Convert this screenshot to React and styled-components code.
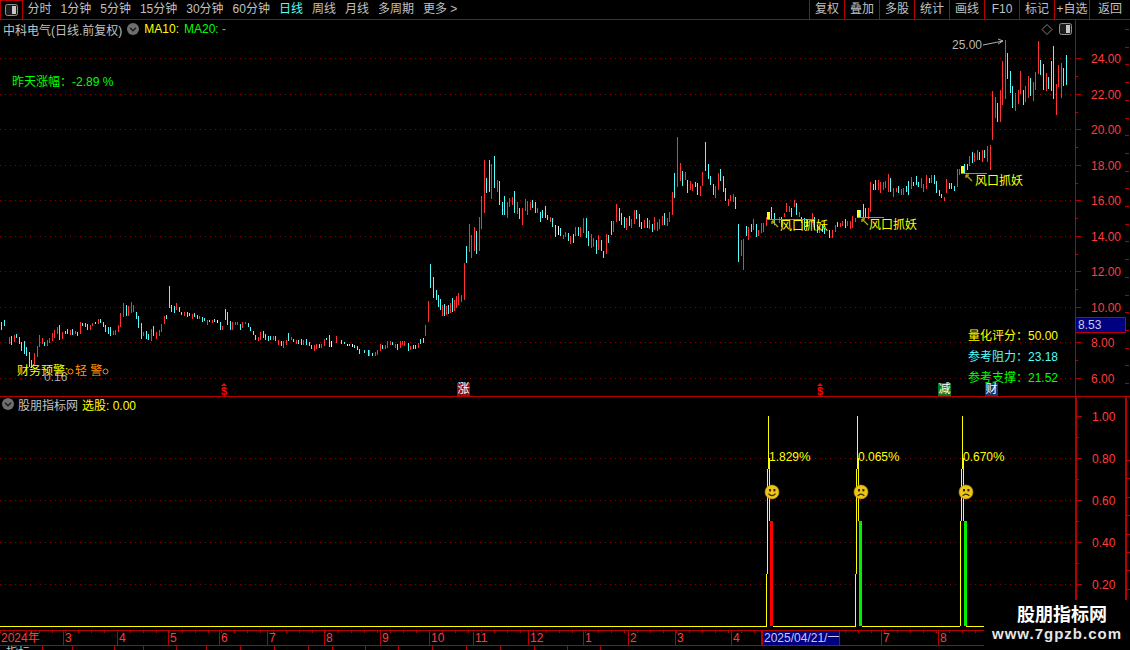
import React from 'react';
import styled, { createGlobalStyle } from 'styled-components';

const FONT = '"Liberation Sans", "Noto Sans CJK SC", sans-serif';
const RED = '#b80000';
const AXIS_TEXT = '#ff3c3c';
const GRID = '#8c0000';

const Global = createGlobalStyle`
  html, body { margin: 0; padding: 0; background: #000; }
  body { font-family: ${FONT}; font-size: 12px; overflow: hidden; }
`;

const Screen = styled.div`
  position: relative; width: 1130px; height: 650px; background: #000; overflow: hidden;
  display: flex; flex-direction: column; color: #c0c0c0;
`;
const Toolbar = styled.div`
  display: flex; align-items: stretch; height: 19px; flex: none;
  border-bottom: 1px solid ${RED};
`;
const ToggleBox = styled.div`
  width: 23px; display: flex; align-items: center; justify-content: center; box-sizing: border-box;
  border: 1px solid ${RED}; border-bottom: 0;
`;
const PeriodList = styled.div`
  display: flex; align-items: center; gap: 9px; padding-left: 4.5px; flex: 1;
`;
const Period = styled.span`
  color: ${p => (p.$active ? '#54fcfc' : '#c0c0c0')}; white-space: nowrap; line-height: 19px;
`;
const ToolGroup = styled.div`display: flex;`;
const ToolButton = styled.div`
  width: ${p => p.$w || 35}px; box-sizing: border-box; border-left: 1px solid ${RED};
  text-align: center; line-height: 18px; color: #c0c0c0; white-space: nowrap;
`;
const Panel = styled.div`
  display: flex; flex: none; height: ${p => p.$h}px; border-bottom: ${p => (p.$line ? `1px solid ${RED}` : '0')};
`;
const Plot = styled.div`position: relative; width: 1075px; flex: none;`;
const ChartSvg = styled.svg`display: block; position: absolute; left: 0; top: 0; overflow: visible;`;
const AxisColumn = styled.div`
  position: relative; flex: 1; box-sizing: border-box; height: ${p => p.$h || '100%'};
  border-left: ${p => p.$bw || 1}px solid ${RED};
  ${p => (p.$rail ? `border-right: 2px solid ${RED}; margin-right: 3px;` : '')}
`;
const AxisLabel = styled.span`
  position: absolute; left: 15px; line-height: 12px; color: ${AXIS_TEXT}; white-space: nowrap;
`;
const PriceTag = styled.div`
  position: absolute; left: 0; top: 297px; width: 50px; height: 16px; box-sizing: border-box;
  background: #000080; border: 1px solid ${RED}; border-left: 0; color: #c8c8e8;
  line-height: 15px; padding-left: 2px;
`;
const Legend = styled.div`
  position: absolute; left: ${p => p.$x}px; top: ${p => p.$y}px; height: 16px;
  display: flex; align-items: center; gap: ${p => p.$gap || 4}px; white-space: nowrap;
`;
const Tx = styled.span`color: ${p => p.$c || '#c0c0c0'}; font-size: ${p => p.$s || 12}px;`;
const Note = styled.span`
  position: absolute; left: ${p => p.$x}px; top: ${p => p.$y}px; color: ${p => p.$c || '#ffff00'};
  font-size: 12px; line-height: 14px; white-space: nowrap;
`;
const Chip = styled.span`
  position: absolute; left: ${p => p.$x}px; top: 363px; width: 13px; height: 13px; line-height: 13px;
  text-align: center; color: #fff; background: ${p => p.$bg}; font-size: 12px;
`;
const Dollar = styled.span`
  position: absolute; left: ${p => p.$x}px; top: 366px; color: #ff0000; font-weight: 700;
  font-size: 11px; line-height: 11px; width: 8px; text-align: center;
  &::before {
    content: ''; position: absolute; left: 1px; top: -3px; width: 0; height: 0;
    border-left: 3px solid transparent; border-right: 3px solid transparent;
    border-bottom: 3px solid #ff0000;
  }
`;
const TimeAxis = styled.div`
  display: flex; height: 16px; flex: none; box-sizing: border-box;
  border-top: 1px solid ${RED}; border-bottom: 1px solid ${RED};
  background: repeating-linear-gradient(90deg, ${RED} 0 1px, transparent 1px 13px) 0 0 / 100% 2px no-repeat;
`;
const TimeCell = styled.div`
  width: ${p => p.$w}px; flex: none; box-sizing: border-box; line-height: 15px; padding-left: 1px;
  color: ${AXIS_TEXT}; border-right: 1px solid ${RED}; white-space: nowrap;
`;
const DateCell = styled(TimeCell)`
  background: #000080; color: #c8c8f0; border-left: 1px solid ${RED}; padding-left: 1px;
`;
const OpenCell = styled(TimeCell)`border-right: 0;`;
const TabRow = styled.div`display: flex; flex: 1; overflow: hidden;`;
const Tab = styled.div`
  width: ${p => p.$w}px; flex: none; box-sizing: border-box; border-right: 1px solid ${RED};
  padding-left: 6px; line-height: 14px; color: #c0c0c0;
`;
const Watermark = styled.div`
  position: absolute; right: 0; bottom: 0; width: 146px; height: 48px; background: #000;
  display: flex; flex-direction: column; align-items: center; padding-top: 1px; box-sizing: border-box; color: #fff;
`;
const WaterTitle = styled.div`font-size: 18px; font-weight: 700; line-height: 24px; margin-left: 10px;`;
const WaterUrl = styled.div`
  font-size: 15px; line-height: 14px; letter-spacing: 1px; color: #e6e6e6; font-weight: 700;
`;

const UP_BARS = [
  [0, 280, `3c126-150 12c120-138 27r171-192 33c168-195 42r165-186 48c162-175 57c171-192 63c186-213 72c183-222 78c200-228 87c216-260 93c240-265 102r219-252 111r198-231 117r165-201 126r174-192 132c186-198 141r180-198 147r175-190 156r160-183 162r150-175 171r142-162 178c135-180 186r155-177 195c153-162 201c147-162 210r150-165 216c147-165 225r153-162 231c156-168 240r126-162 246c129-138 255c129-142 261c132-150 270r135-150 276r129-138 285c126-132 294r117-132 300c117-130 309c126-141 315c135-156 324c141-162 330c141-168 339r153-165 345r150-165 354r135-156 360r99-141 369r69-111 378c75-108 384r78-108 393r66-99 399r75-96 408c96-117 414c108-144 423c129-177 430r156-168 438c153-177 444c162-180 453r147-183 460c138-168 468r156-177 477r150-168 483r132-156 492r108-132 498c105-117 507c18-84 513c75-96 522c78-99 528r69-90 537c81-96 543c96-105 552r96-108 561c96-111 567c99-108 576r102-117 582c99-111 591c105-117 597r108-117 606c111-126 612c114-123 621r120-135 627c120-126 636r120-129 642c117-126 651w120-129 660c126-150 666r138-150 675c87-120 681c96-135 690c123-150 696r126-150 705r126-135 711r126-135 720c132-150 726r126-144 735r126-132 744c129-141 750c141-153 759c153-165 765c165-180 774r171-183 780r156-180 789c153-174 795c162-180 804c168-183 810c168-180 819r168-180 825c168-183 834r180-195 843c183-198 849r183-204 858r180-195 864c159-183 873r171-180 879c177-186 888r180-192 894c180-192 903c177-195 909r180-195 918c177-195 927c186-198 933c195-207 942r195-213 948r192-207 957c192-204 963r192-204 972r177-198 978c174-180 987c165-201 993w183-201 1008r168-189 1023c180-192 1032c186-192 1041w192-198 1047c192-198 1056w192-201 1062c195-204 1071c198-210 1077c207-222 1092c210-219 1104c210-228 1107r210-228 1116c219-228 1125r216-228 1131r210-225 1140r192-213 1146c195-207 1155r195-207 1161r183-204 1170r183-195 1176c186-195 1185r192-204 1191c192-210 1200r183-204 1206r183-195 1212r183-198 1224c189-213 1230r198-210 1239c195-207 1245c195-207 1254r189-204 1260c177-192 1269c174-190 1275r135-168 1284r63-126`],
  [420, 130, `30c402-473 39c440-503 48c480-510 54c505-520 114r490-510 124c505-515 133r400-510 139c348-398 148r282-365 154r315-383 163r291-362 169c303-371 178r261-362 184r198-296 193r91-248 199c145-190 208c90-186 214r102-206 223c78-173 232r150-185 238c153-224 247c216-254 253c198-254 262r216-263 268r204-231 277r201-225 283c183-248 292r216-251 298c234-266 307r234-285 316r207-243 322r213-254 331r216-240 337c210-234 346c216-248 352r234-248 361c246-276 367c240-263 376c228-264 382c255-270 391r261-275 397c264-291 406c285-320 415w288-315 421c294-318 430r315-327 436r306-321 445c309-333 451r318-342 460c312-339 466r291-318 475c291-318 481r291-321 490r264-309 499c264-323 505c303-348 514r312-353 520r324-350 529c330-372 535r315-360 544c330-363 550c363-384 559r312-372 565c315-339 574c273-315 580r273-306 589r222-276 598c234-273 604c249-285 613c261-294 619r264-300 628c258-288 634r267-294 643r240-282 649c240-267 658c252-291 664c276-297 673r270-294 682c264-294 688r270-297 697c282-306 703r261-300 712r276-303 718r267-297 727r258-285 733c249-285 742r264-288 748r246-276 757r186-255 763c129-204 772r21-171 781r99-153 787c123-168 796r126-150 802c150-189 811r153-180 817r162-183 826c156-171 832c159-195 841r168-198 847r126-168 856c36-123 865c102-147 871c138-165 880c162-195 886r168-204 895r129-180 901c117-153 910c138-186 916c174-213 925r207-228 931r195-213 940r192-216 946c201-237 955c282-396 964r330-378 970r327-420 979c288-318 985r291-330 994c282-306 1000r267-300 1009c282-321 1015r300-318`],
  [730, 160, `94r190-220 100r188-215 109r172-198 124c141-178 133c160-195 148r170-190 154c172-200 163r160-172 169r129-157 178r138-157 184c145-172 193r120-141 199c129-165 208r156-172 214c172-190 223c175-210 232c178-200 247r160-190 253c172-210 262c195-220 268r205-220 277c195-215 283c205-222 298c211-235 307r211-235 316r195-215 322c186-200 331r190-200 337r183-198 346c178-204 352r184-198 361r183-207 367r168-204 376r175-185 391c150-175 400c132-172 406c144-170 415r145-178 421r66-157 430c72-90 436c60-90 445r60-90 451r66-99 460r66-90 466r63-84 475r42-96 481c54-96 490r84-110 499r84-96 505c78-99 514r87-105 520r84-105 529c78-96 535c63-105 544r51-87 550c66-78 559c48-75 565c66-81 574r54-84 580r72-96 589r45-87 598c54-69 604r45-69 613c45-72 619c63-99 628c90-108 634c102-114 643r111-123 649r57-99 658c69-87 664c69-87 673c78-93 682r27-81 688r27-45 703c12-42 712c12-30`],
  [0, 0, `438c295-307 440c299-310 442r305-316 444c304-316 446r306-315 448c305-314 450r303-313 452c298-312 454r300-311 456r296-308 458r293-305 461r295-302 969r156-166 972c152-163 974r153-162 977r150-160 979c152-160 982r150-162 984c150-158 987r146-162 990r145-170`],
  [940, 20, `157r213-360 166r232-294 172c250-306 181r210-305 187r123-255 196r60-237 202c99-177 211c153-218 217c198-264 226r220-273 235r210-252 241r153-222 250c210-255 256r198-246 265r168-234 271c174-228 280r186-243 286r156-210 295r63-162 301c120-165 310c132-210 319r159-213 325c171-207 334c123-213 340c78-237 349r192-285 355r135-201 364r129-234 370c144-198 379c105-195`],
];
const BAR_COLOR = { r: '#ff3232', c: '#54fcfc', w: '#ffffff' };
const bars = UP_BARS.flatMap(([ox, oy, s]) => s.split(' ').map(tok => {
  const m = tok.match(/^(\d+)([rcw])(\d+)-(\d+)$/);
  const scale = ox === 0 && oy === 0 ? 1 : 3;
  return {
    x: Math.round(ox + +m[1] / scale),
    y1: Math.round(oy + +m[3] / scale),
    y2: Math.round(oy + +m[4] / scale),
    c: BAR_COLOR[m[2]],
  };
}));

const PRICE_TICKS = [[24, 58], [22, 94], [20, 129], [18, 165], [16, 200], [14, 236], [12, 271], [10, 307], [8, 342], [6, 378]];
const PERCENT_TICKS = [['1.00', 416], ['0.80', 458], ['0.60', 500], ['0.40', 542], ['0.20', 584]];
const PERIODS = ['分时', '1分钟', '5分钟', '15分钟', '30分钟', '60分钟', '日线', '周线', '月线', '多周期', '更多 >'];
const TOOLS = ['复权', '叠加', '多股', '统计', '画线', 'F10', '标记', '+自选', '返回'];
const MONTHS = [['2024年', 64], ['3', 54], ['4', 51], ['5', 51], ['6', 48], ['7', 57], ['8', 56], ['9', 49], ['10', 44], ['11', 55], ['12', 55], ['1', 45], ['2', 47], ['3', 56], ['4', 30]];
const TABS = [43, 30, 42, 29, 33, 30, 34, 34, 34, 24, 33, 33, 34, 34, 34, 34, 33, 33];
const SIGNALS = [
  { x: 768, pct: '1.829', bar: '#ff0000', sad: false, lowY: 574 },
  { x: 857, pct: '0.065', bar: '#00f000', sad: true, lowY: 574 },
  { x: 962, pct: '0.670', bar: '#00f000', sad: true, lowY: 521 },
];
const WIND = [
  { x: 767, y: 212, lineEnd: 815, tx: 780, ty: 199 },
  { x: 857, y: 210, lineEnd: 884, tx: 869, ty: 198 },
  { x: 961, y: 166, lineEnd: 987, tx: 975, ty: 154 },
];
const UPPER_EDGE_TICKS = Array.from({ length: 21 }, (_, i) => 9 + i * 17.7);
const LOWER_EDGE_TICKS = Array.from({ length: 8 }, (_, i) => 63 + i * 18.4);

function PanelToggle() {
  return (
    <svg width="13" height="12" viewBox="0 0 13 12">
      <rect x="0.5" y="0.5" width="12" height="11" rx="2" fill="#1c1c1c" stroke="#909090" />
      <rect x="7" y="2" width="4" height="8" fill="#c8c8c8" />
    </svg>
  );
}
function Chevron() {
  return (
    <svg width="12" height="12" viewBox="0 0 12 12">
      <circle cx="6" cy="6" r="6" fill="#6e6e6e" />
      <path d="M3 4.8 L6 7.8 L9 4.8" fill="none" stroke="#1a1a1a" strokeWidth="1.4" />
    </svg>
  );
}
function Face({ x, y, sad }) {
  return (
    <g transform={`translate(${x} ${y})`}>
      <circle r="7" fill="#eec41a" />
      <circle r="7" fill="none" stroke="#b89410" strokeWidth="0.6" />
      <rect x="-3" y="-3" width="2" height="2.4" fill="#3a2a00" />
      <rect x="1.4" y="-3" width="2" height="2.4" fill="#3a2a00" />
      <path d={sad ? 'M-3.4 3.8 Q0 0.4 3.4 3.8' : 'M-3.6 1.6 Q0 5.6 3.6 1.6'} fill="none" stroke="#3a2a00" strokeWidth="1.1" />
    </g>
  );
}

function UpperChart() {
  return (
    <ChartSvg width="1075" height="376" viewBox="0 20 1075 376" shapeRendering="crispEdges">
      {PRICE_TICKS.map(([, y]) => (
        <line key={y} x1="0" x2="1075" y1={y + 0.5} y2={y + 0.5} stroke={GRID} strokeDasharray="1 4" />
      ))}
      {bars.map((b, i) => <rect key={i} x={b.x} y={b.y1} width="1" height={Math.max(1, b.y2 - b.y1)} fill={b.c} />)}
      {WIND.map(w => (
        <g key={w.x}>
          <rect x={w.x} y={w.y} width="3" height="7" fill="#ffff00" />
          <rect x={w.x} y={w.y + 7} width={w.lineEnd - w.x} height="1" fill="#00f000" />
          <path d={`M${w.x + 11} ${w.y + 15} L${w.x + 5} ${w.y + 9} M${w.x + 5} ${w.y + 9} h3 M${w.x + 5} ${w.y + 9} v3`}
            stroke="#b8a000" strokeWidth="1.4" fill="none" shapeRendering="auto" />
        </g>
      ))}
      <path d="M983 45 L993 43 L1003 41 M998 39 L1003 41 L998 44" stroke="#b0b0b0" fill="none" shapeRendering="auto" />
      <path d="M1047 24.5 L1052 29.5 L1047 34.5 L1042 29.5 Z" stroke="#808080" fill="none" shapeRendering="auto" />
      <circle cx="70.5" cy="371.5" r="2.5" fill="none" stroke="#ff9900" shapeRendering="auto" />
      <circle cx="105.5" cy="371.5" r="2.5" fill="none" stroke="#ff9900" shapeRendering="auto" />
    </ChartSvg>
  );
}

function LowerChart() {
  const segments = [[0, 767], [773, 856], [862, 960], [966, 1075]];
  return (
    <ChartSvg width="1075" height="233" viewBox="0 397 1075 233" shapeRendering="crispEdges">
      {PERCENT_TICKS.slice(1).map(([, y]) => (
        <line key={y} x1="0" x2="1075" y1={y + 0.5} y2={y + 0.5} stroke={GRID} strokeDasharray="1 4" />
      ))}
      {segments.map(([a, b]) => <rect key={a} x={a} y="626" width={b - a} height="1" fill="#ffff00" />)}
      {SIGNALS.map(s => (
        <g key={s.x}>
          <rect x={s.x} y="416" width="1" height="53" fill="#ffff00" />
          <rect x={s.x - 0.5} y="458" width="2" height="11" fill="#ffff00" />
          <rect x={s.x - 1} y="469" width="1" height={s.lowY - 469} fill="#ffff00" />
          <rect x={s.x - 2} y={s.lowY} width="1" height={626 - s.lowY} fill="#ffff00" />
          <rect x={s.x + 1} y="469" width="1" height="52" fill="#ffff00" />
          <rect x={s.x + 2} y="521" width="3" height="105" fill={s.bar} />
          <g shapeRendering="auto"><Face x={s.x + 4} y={492} sad={s.sad} /></g>
        </g>
      ))}
    </ChartSvg>
  );
}

function TickRail({ ticks, h, edge, edgeColor }) {
  return (
    <ChartSvg width="54" height={h} shapeRendering="crispEdges">
      {ticks.map(y => <rect key={y} x="0" y={y} width="5" height="1" fill={RED} />)}
      {ticks.slice(0, -1).map((y, i) => (
        <rect key={`m${y}`} x="0" y={Math.round((y + ticks[i + 1]) / 2)} width="2" height="1" fill={RED} />
      ))}
      {edge.map(y => <rect key={`e${y}`} x="49" y={Math.round(y)} width="4" height="1" fill={edgeColor} />)}
    </ChartSvg>
  );
}

export default function App() {
  return (
    <Screen>
      <Global />
      <Toolbar>
        <ToggleBox><PanelToggle /></ToggleBox>
        <PeriodList>
          {PERIODS.map(p => <Period key={p} $active={p === '日线'}>{p}</Period>)}
        </PeriodList>
        <ToolGroup>
          {TOOLS.map(t => <ToolButton key={t} $w={t === '返回' ? 41 : 35}>{t}</ToolButton>)}
        </ToolGroup>
      </Toolbar>

      <Panel $h={376} $line>
        <Plot>
          <UpperChart />
          <Legend $x={3} $y={1} $gap={5}>
            <Tx>中科电气(日线.前复权)</Tx>
            <Chevron />
            <Tx $c="#ffff00">MA10:</Tx>
            <Tx $c="#00ff00">MA20: -</Tx>
          </Legend>
          <Legend $x={1059} $y={1}><PanelToggle /></Legend>
          <Note $x={12} $y={55} $c="#00ff00">昨天涨幅：-2.89 %</Note>
          <Note $x={952} $y={18} $c="#b8b8b8">25.00</Note>
          <Note $x={44} $y={350} $c="#a8a8a8">0.16</Note>
          <Note $x={17} $y={344}>财务预警:</Note>
          <Note $x={75} $y={344} $c="#ff9900">轻 警</Note>
          {WIND.map(w => <Note key={w.x} $x={w.tx} $y={w.ty}>风口抓妖</Note>)}
          <Note $x={968} $y={309}>量化评分：50.00</Note>
          <Note $x={968} $y={330} $c="#54fcfc">参考阻力：23.18</Note>
          <Note $x={968} $y={351} $c="#00ff00">参考支撑：21.52</Note>
          <Dollar $x={220}>$</Dollar>
          <Chip $x={457} $bg="#8c1010">涨</Chip>
          <Dollar $x={816}>$</Dollar>
          <Chip $x={938} $bg="#0a7a20">减</Chip>
          <Chip $x={985} $bg="#103a70">财</Chip>
        </Plot>
        <AxisColumn>
          <TickRail ticks={PRICE_TICKS.map(([, y]) => y - 20)} h={376} edge={UPPER_EDGE_TICKS} edgeColor={RED} />
          {PRICE_TICKS.map(([v, y]) => (
            <AxisLabel key={v} style={{ top: y - 25 }}>{v.toFixed(2)}</AxisLabel>
          ))}
          <PriceTag>8.53</PriceTag>
        </AxisColumn>
      </Panel>

      <Panel $h={233}>
        <Plot>
          <LowerChart />
          <Legend $x={2} $y={-1}>
            <Chevron />
            <Tx>股朋指标网</Tx>
            <Tx $c="#ffff00">选股: 0.00</Tx>
          </Legend>
          {SIGNALS.map(s => (
            <Note key={s.x} $x={s.x + 1} $y={53}>{s.pct}<Tx $c="#ffff00" $s={13}>%</Tx></Note>
          ))}
        </Plot>
        <AxisColumn $bw={2} $rail $h="203px">
          <TickRail ticks={PERCENT_TICKS.map(([, y]) => y - 397)} h={203} edge={LOWER_EDGE_TICKS} edgeColor={RED} />
          {PERCENT_TICKS.map(([v, y]) => (
            <AxisLabel key={v} style={{ top: y - 402 }}>{v}</AxisLabel>
          ))}
        </AxisColumn>
      </Panel>

      <TimeAxis>
        {MONTHS.map(([m, w], i) => <TimeCell key={i} $w={w}>{m}</TimeCell>)}
        <DateCell $w={78}>2025/04/21/一</DateCell>
        <TimeCell $w={42} />
        <TimeCell $w={57}>7</TimeCell>
        <OpenCell $w={190}>8</OpenCell>
      </TimeAxis>
      <TabRow>
        {TABS.map((w, i) => <Tab key={i} $w={w}>{i === 0 ? '指标' : ''}</Tab>)}
      </TabRow>

      <Watermark>
        <WaterTitle>股朋指标网</WaterTitle>
        <WaterUrl>www.7gpzb.com</WaterUrl>
      </Watermark>
    </Screen>
  );
}
